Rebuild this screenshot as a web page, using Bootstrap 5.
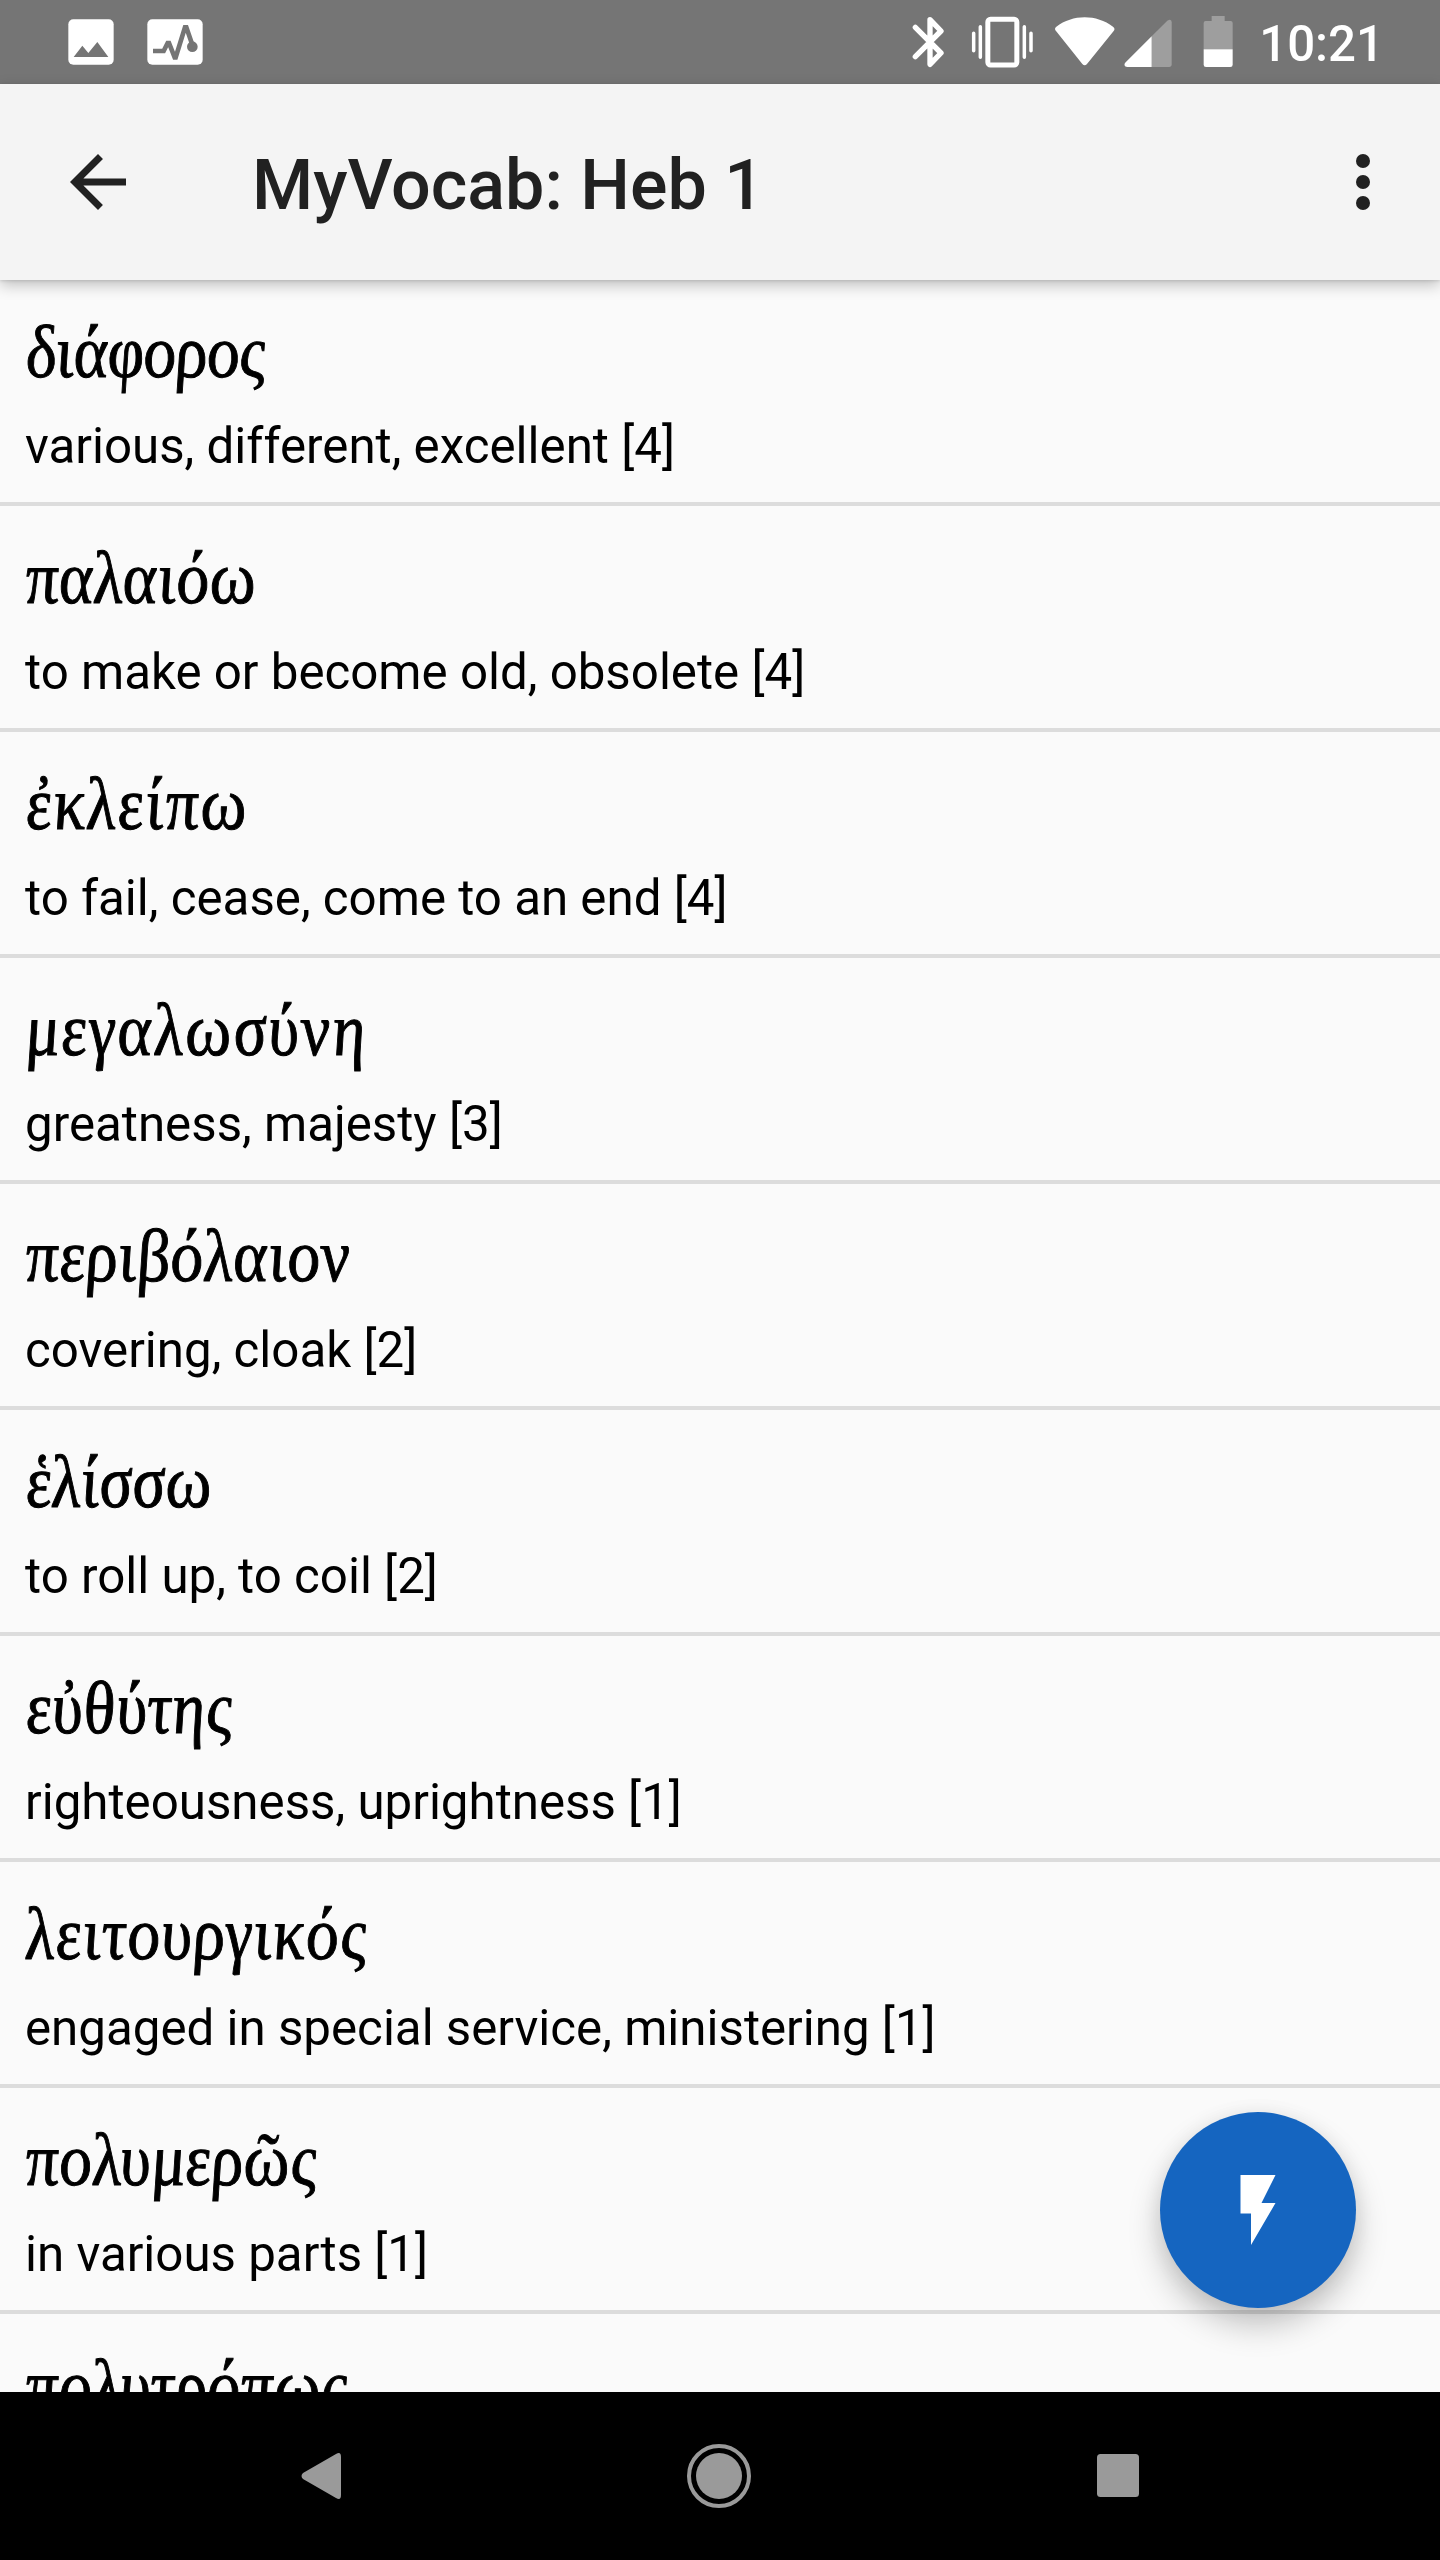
<!DOCTYPE html>
<html lang="en">
<head>
<meta charset="utf-8">
<meta name="viewport" content="width=device-width, initial-scale=1">
<title>MyVocab: Heb 1</title>
<link href="https://cdn.jsdelivr.net/npm/bootstrap@5.3.0/dist/css/bootstrap.min.css" rel="stylesheet">
<style>
body { font-family: Roboto, sans-serif; background: #fafafa; color: #000; }
.screen { width: 1440px; height: 2560px; }
.status-bar { height: 84px; background: #757575; color: #fff; padding-left: 68px; padding-right: 56px; }
.status-bar svg { display: block; flex: none; }
.clock { font-size: 49.200px; font-weight: 500; line-height: 84px; padding-top: 2px; height: 84px; margin-left: 25px; }
.app-bar { height: 196px; background: #f4f4f4; color: #212121; padding: 0 35px 0 56px; z-index: 2;
  box-shadow: 0 5px 14px rgba(0,0,0,.24), 0 1px 3px rgba(0,0,0,.12); }
.app-title { font-size: 70px; font-weight: 500; line-height: 84px; margin-left: 112px; padding-top: 6px; white-space: nowrap; }
.vocab .list-group-item { flex: none; height: 226px; padding: 0 25px; background: #fafafa; color: #000; border: 0; border-bottom: 4px solid #dcdcdc; }
.greek { font-family: "Liberation Serif", serif; font-style: italic; font-size: 75px; line-height: 90px; padding: 27px 0 0 2px; height: 126px; white-space: nowrap; -webkit-text-stroke: 1px #000; }
.greek span { display: inline-block; transform: skewX(5deg) scaleX(.87); transform-origin: 0 75%; }
.gloss { font-size: 49.250px; line-height: 60px; margin-top: 10px; white-space: nowrap; }
.fab { right: 84px; bottom: 84px; width: 196px; height: 196px; background: #1565c0; z-index: 2;
  box-shadow: 0 18px 32px rgba(0,0,0,.22), 0 2px 20px rgba(0,0,0,.07); }
.nav-keys { height: 168px; background: #000; padding: 0 301px 1px; }
</style>
<script src="https://cdn.jsdelivr.net/npm/bootstrap@5.3.0/dist/js/bootstrap.bundle.min.js"></script>
</head>
<body>
<div class="screen d-flex flex-column overflow-hidden">
  <div class="status-bar d-flex align-items-center flex-shrink-0">
    <svg width="135" height="84" viewBox="204 0 405 252" fill="#fff">
      <rect x="205" y="58" width="136" height="136" rx="15"/>
      <path fill="#757575" d="M221 171l26-34 18 22 27-33 33 45z"/>
      <rect x="442" y="58" width="166" height="136" rx="15"/>
      <path d="M459 153h32l12-24 4 0 17 43h3l28-90h4l20 58" fill="none" stroke="#757575" stroke-width="14"/>
      <circle cx="577" cy="140" r="16" fill="#757575"/>
    </svg>
    <svg class="ms-auto" width="322" height="84" viewBox="64 0 966 252" fill="#fff">
      <path d="M74 82l77 77-33 34V59l33 34-77 77" fill="none" stroke="#fff" stroke-width="16" stroke-linejoin="round" stroke-linecap="round"/>
      <rect x="291.500" y="58" width="87" height="137" rx="8" fill="none" stroke="#fff" stroke-width="15"/>
      <path d="M269 80v92M401 80v92M249 100v52M421 100v52" stroke="#fff" stroke-width="10.500" stroke-linecap="round"/>
      <path d="M496 93c-4-5-4-9 1-13 49-38 121-38 170 0 5 4 6 8 2 13l-80 99q-7 8-14 0z"/>
      <path d="M830 62q13-7 13 5v126q0 8-8 8h-52V109z" opacity=".3"/>
      <path d="M783 109v92h-73c-9 0-11-8-5-14z"/>
      <path d="M963 48h39v15h18q6 0 6 6v79h-87V69q0-6 6-6h18z" opacity=".3"/>
      <path d="M939 148h87v46q0 7-7 7h-73q-7 0-7-7z"/>
    </svg>
    <div class="clock">10:21</div>
  </div>

  <header class="app-bar d-flex align-items-center flex-shrink-0 position-relative">
    <svg width="84" height="84" viewBox="0 0 24 24" fill="#212121"><path d="M20 11H7.830l5.590-5.590L12 4l-8 8 8 8 1.410-1.410L7.830 13H20z"/></svg>
    <h1 class="app-title mb-0">MyVocab: Heb 1</h1>
    <svg class="ms-auto" width="84" height="84" viewBox="0 0 24 24" fill="#212121"><circle cx="12" cy="6" r="2"/><circle cx="12" cy="12" r="2"/><circle cx="12" cy="18" r="2"/></svg>
  </header>

  <main class="flex-grow-1 position-relative overflow-hidden">
    <div class="vocab list-group list-group-flush">
      <div class="list-group-item"><div class="greek"><span data-w="240">διάφορος</span></div><div class="gloss">various, different, excellent [4]</div></div>
      <div class="list-group-item"><div class="greek"><span data-w="230">παλαιόω</span></div><div class="gloss">to make or become old, obsolete [4]</div></div>
      <div class="list-group-item"><div class="greek"><span data-w="221">ἐκλείπω</span></div><div class="gloss">to fail, cease, come to an end [4]</div></div>
      <div class="list-group-item"><div class="greek"><span data-w="339">μεγαλωσύνη</span></div><div class="gloss">greatness, majesty [3]</div></div>
      <div class="list-group-item"><div class="greek"><span data-w="324">περιβόλαιον</span></div><div class="gloss">covering, cloak [2]</div></div>
      <div class="list-group-item"><div class="greek"><span data-w="186">ἑλίσσω</span></div><div class="gloss">to roll up, to coil [2]</div></div>
      <div class="list-group-item"><div class="greek"><span data-w="207">εὐθύτης</span></div><div class="gloss">righteousness, uprightness [1]</div></div>
      <div class="list-group-item"><div class="greek"><span data-w="341">λειτουργικός</span></div><div class="gloss">engaged in special service, ministering [1]</div></div>
      <div class="list-group-item"><div class="greek"><span data-w="291">πολυμερῶς</span></div><div class="gloss">in various parts [1]</div></div>
      <div class="list-group-item"><div class="greek"><span data-w="322">πολυτρόπως</span></div></div>
    </div>
    <button class="fab btn rounded-circle border-0 p-0 position-absolute d-flex align-items-center justify-content-center" aria-label="Flash cards">
      <svg width="84" height="84" viewBox="0 0 24 24" fill="#fff"><path d="M7 2v11h3v9l7-12h-4l4-8z"/></svg>
    </button>
  </main>

  <nav class="nav-keys d-flex align-items-center justify-content-between flex-shrink-0">
    <svg width="40" height="48" viewBox="0 0 40 48" fill="#9a9a9a"><path d="M35 2q5-3 5 3v38q0 6-5 3L2 27q-3-3 0-6z"/></svg>
    <svg width="64" height="64" viewBox="0 0 64 64" fill="#9a9a9a"><circle cx="32" cy="32" r="23"/><circle cx="32" cy="32" r="30" fill="none" stroke="#9a9a9a" stroke-width="4"/></svg>
    <svg width="42" height="43" viewBox="0 0 42 43" fill="#9a9a9a"><rect width="42" height="43" rx="3.500"/></svg>
  </nav>
</div>
<script>
  // Track each headword so that it fills its set measure once condensed
  var condense = 0.87;
  document.querySelectorAll('.greek span').forEach(function (el) {
    var n = Array.from(el.textContent).length;
    el.style.letterSpacing = ((el.dataset.w / condense - el.offsetWidth) / (n - 1)) + 'px';
  });
</script>
</body>
</html>
